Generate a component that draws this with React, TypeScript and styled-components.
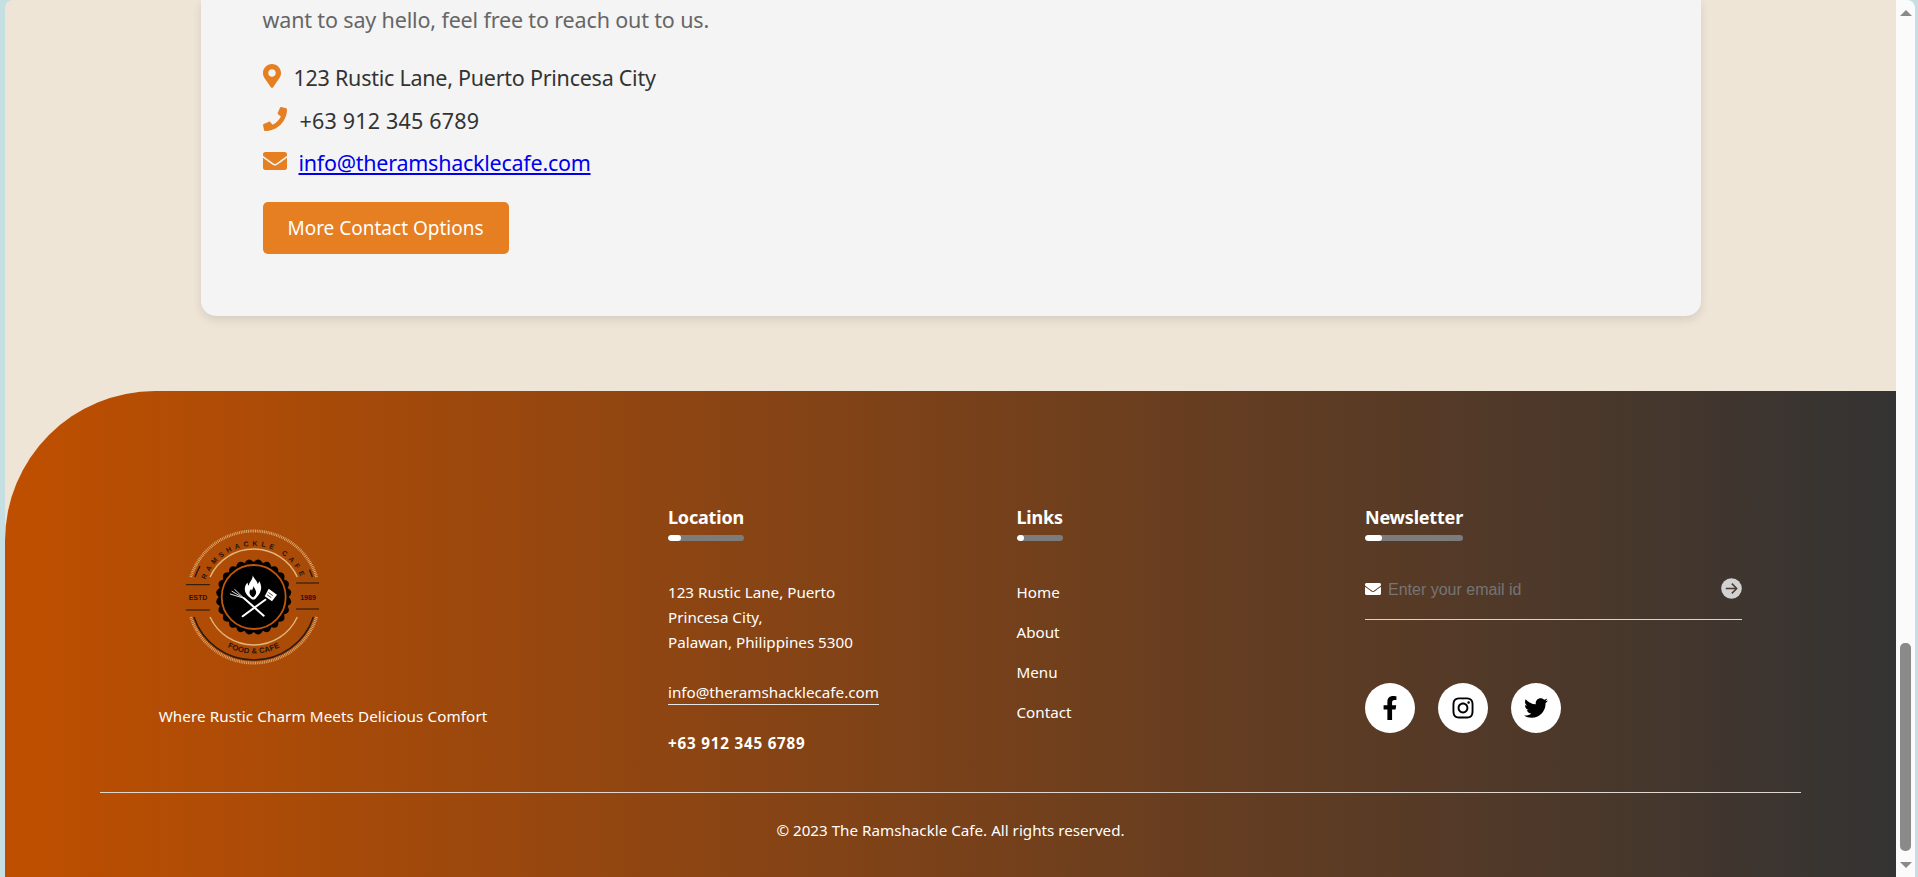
import { FC, ReactNode } from 'react';
import styled, { createGlobalStyle } from 'styled-components';
import { FaEnvelope, FaFacebookF, FaInstagram, FaMapMarkerAlt, FaPhone, FaTwitter } from 'react-icons/fa';

const GlobalStyle = createGlobalStyle`
  html, body {
    margin: 0;
    padding: 0;
    height: 877px;
    overflow: hidden;
  }
  * {
    box-sizing: border-box;
  }
`;

const Window = styled.div`
  display: flex;
  height: 877px;
  padding: 0 3px 0 5px;
  overflow: hidden;
  background: #c5dfe3;
  font-family: "Noto Sans", "Open Sans", sans-serif;
`;

const Page = styled.div`
  flex: 1;
  min-width: 0;
  border-top-left-radius: 8px;
  overflow: hidden;
  background: #eee5d7;
`;

const ScrollBar = styled.div`
  flex: none;
  width: 19px;
  display: flex;
  flex-direction: column;
  align-items: center;
  border-top-right-radius: 8px;
  background: #fbfbfb;
`;

const Arrow = styled.div<{ $down?: boolean }>`
  width: 0;
  height: 0;
  margin-top: ${(p) => (p.$down ? '11px' : '10px')};
  border-left: 6px solid transparent;
  border-right: 6px solid transparent;
  ${(p) => (p.$down ? 'border-top: 6px solid #8a8a8a;' : 'border-bottom: 6px solid #8a8a8a;')}
`;

const Thumb = styled.div`
  width: 11px;
  height: 208px;
  margin-top: 627px;
  border-radius: 5px;
  background: #8a8a8a;
`;

const Card = styled.section`
  width: 1500px;
  margin: 0 auto 75px;
  padding: 4px 62px 62px;
  border-radius: 0 0 15px 15px;
  background: #f4f4f4;
  box-shadow: 0 4px 10px rgba(0, 0, 0, 0.1);
`;

const Intro = styled.p`
  margin: 0 0 27px;
  font-size: 21.5px;
  line-height: 31px;
  letter-spacing: -0.15px;
  color: #666;
`;

const ContactRow = styled.div<{ $gap: number; $spacing: number }>`
  display: flex;
  align-items: flex-start;
  gap: ${(p) => p.$gap}px;
  height: 31px;
  margin-bottom: 11.5px;
  font-size: 21.5px;
  line-height: 31px;
  letter-spacing: ${(p) => p.$spacing}px;
  color: #333;

  svg {
    flex: none;
    margin-top: 2px;
    font-size: 24px;
    color: #e67e22;
  }
  a {
    color: #0000ee;
  }
`;

const PinIcon = styled(FaMapMarkerAlt)`
  width: 18px;
`;

const MoreButton = styled.button`
  display: block;
  width: 246px;
  height: 52px;
  margin-top: 24px;
  padding: 0;
  border: none;
  border-radius: 5px;
  background: #e67e22;
  color: #fff;
  font-family: inherit;
  font-size: 19px;
`;

const Footer = styled.footer`
  height: 486px;
  padding: 114px 95px 0;
  border-top-left-radius: 150px;
  background: linear-gradient(to right, #bf4f00, #333);
  color: #fff;
`;

const Columns = styled.div`
  display: grid;
  grid-template-columns: 568px 348.5px 348.5px 377px;
`;

const Brand = styled.div`
  padding-top: 5px;
`;

const Logo = styled.svg`
  display: block;
  width: 200px;
  height: 170px;
  margin-left: 50px;
`;

const Tagline = styled.p`
  width: 446px;
  margin: 24px 0 0;
  text-align: center;
  font-size: 15.2px;
  line-height: 24px;
  letter-spacing: 0.1px;
`;

const HeadingBox = styled.h3`
  display: inline-block;
  margin: 0;
  font-size: 18px;
  font-weight: 700;
  line-height: 24px;
  letter-spacing: -0.2px;
  vertical-align: top;
`;

const HeadingBar = styled.span`
  display: block;
  height: 6px;
  margin-top: 6px;
  border-radius: 3px;
  overflow: hidden;
  background: #7c7c7c;

  &::before {
    content: '';
    display: block;
    width: 17%;
    height: 100%;
    border-radius: 3px;
    background: #fff;
  }
`;

const Heading: FC<{ children: ReactNode }> = ({ children }) => (
  <HeadingBox>
    {children}
    <HeadingBar />
  </HeadingBox>
);

const Address = styled.address`
  margin-top: 39px;
  font-style: normal;
  font-size: 15.2px;
  line-height: 25px;
`;

const MailLink = styled.a`
  display: inline-block;
  margin-top: 26px;
  border-bottom: 1px solid #e6e6e6;
  font-size: 15.2px;
  line-height: 23px;
`;

const Phone = styled.p`
  margin: 26px 0 0;
  font-size: 15.2px;
  font-weight: 700;
  line-height: 24px;
  letter-spacing: 0.8px;
`;

const LinkList = styled.ul`
  display: flex;
  flex-direction: column;
  gap: 16px;
  margin: 39px 0 0;
  padding: 0;
  list-style: none;
  font-size: 15.2px;
  line-height: 24px;
`;

const Subscribe = styled.form`
  display: flex;
  align-items: center;
  height: 49px;
  margin-top: 30px;
  padding-bottom: 13px;
  border-bottom: 1px solid #d9d4d0;

  > svg:first-child {
    flex: none;
    font-size: 16px;
  }
`;

const EmailInput = styled.input`
  flex: 1;
  min-width: 0;
  height: 22px;
  margin: 2px 0 0 7px;
  padding: 0;
  border: none;
  outline: none;
  background: transparent;
  font-family: "Liberation Sans", Arial, sans-serif;
  font-size: 16px;

  &::placeholder {
    color: #757575;
    opacity: 1;
  }
`;

const GoIcon = styled.svg`
  flex: none;
  width: 21px;
  height: 21px;
`;

const Socials = styled.div`
  display: flex;
  gap: 23px;
  margin-top: 63px;
`;

const SocialLink = styled.a`
  display: flex;
  align-items: center;
  justify-content: center;
  width: 50px;
  height: 50px;
  border-radius: 50%;
  background: #fff;
  color: #000;
  font-size: 24px;
`;

const Rule = styled.hr`
  height: 1px;
  margin: 37px 0 0;
  border: none;
  background: #e0d8d0;
`;

const Copyright = styled.p`
  margin: 25px 0 0;
  text-align: center;
  font-size: 15.2px;
  line-height: 25px;
`;

const CX = 103.7;
const CY = 87;

// arc over the top (up) or under the bottom, ends lifted off the horizontal by `off`
const arc = (r: number, off: number, up: boolean) => {
  const dx = Math.sqrt(r * r - off * off);
  const y = up ? CY - off : CY + off;
  return `M ${CX - dx} ${y} A ${r} ${r} 0 0 ${up ? 1 : 0} ${CX + dx} ${y}`;
};

const scallop = (() => {
  const teeth = 24;
  const parts: string[] = [];
  for (let i = 0; i < teeth; i++) {
    const a = (i / teeth) * Math.PI * 2;
    const b = ((i + 0.5) / teeth) * Math.PI * 2;
    const c = ((i + 1) / teeth) * Math.PI * 2;
    if (i === 0) parts.push(`M ${CX + 35 * Math.cos(a)} ${CY + 35 * Math.sin(a)}`);
    parts.push(`Q ${CX + 41 * Math.cos(b)} ${CY + 41 * Math.sin(b)} ${CX + 35 * Math.cos(c)} ${CY + 35 * Math.sin(c)}`);
  }
  return parts.join(' ') + ' Z';
})();

const CafeLogo: FC = () => (
  <Logo viewBox="0 0 200 170" role="img" aria-label="Ramshackle Cafe logo">
    <defs>
      <path id="logo-top" d={arc(51, 0, true)} />
      <path id="logo-bottom" d={arc(56.5, 0, false)} />
    </defs>
    <g fill="none">
      <path d={arc(66, 20, true)} stroke="#dba468" strokeWidth="3" strokeDasharray="1 0.8" />
      <path d={arc(66, 20, false)} stroke="#dba468" strokeWidth="3" strokeDasharray="1 0.8" />
      <path d={arc(48, 20, true)} stroke="#e2b77d" strokeWidth="1.4" />
      <path d={arc(48, 20, false)} stroke="#e2b77d" strokeWidth="1.4" />
      <path d={arc(63, 20, false)} stroke="#2a1a12" strokeWidth="1.5" />
      <path d={arc(62, 20, true)} stroke="#2a1a12" strokeWidth="1.5" strokeDasharray="12 134 12 200" />
    </g>
    <path d="M36 74.7H60M36 100H60M146 73H169M146 99H169" stroke="#1c1410" strokeWidth="1" />
    <g fontFamily='"Liberation Sans", Arial, sans-serif' fontWeight="700" fill="#1f1410">
      <text x="48" y="89.5" fontSize="7" textAnchor="middle">ESTD</text>
      <text x="158" y="89.5" fontSize="7" textAnchor="middle">1989</text>
      <text fontSize="7" letterSpacing="3.6">
        <textPath href="#logo-top" startOffset="50%" textAnchor="middle">RAMSHACKLE CAFE</textPath>
      </text>
      <text fontSize="7.6" letterSpacing="0.2">
        <textPath href="#logo-bottom" startOffset="50%" textAnchor="middle">FOOD &amp; CAFE</textPath>
      </text>
    </g>
    <path d={scallop} fill="#000" />
    <circle cx={CX} cy={CY} r="32" fill="#000" stroke="#c2570a" strokeWidth="1.8" />
    <path
      fill="#fff"
      d="M102.7 65.3c1.2 3.4 4 5 5 8.6.9-.8 1.3-1.8 1.3-3 2.1 2.8 2.6 6.4 1.8 9.4-.7 2.9-2.6 5.5-5.3 8.4-1.2.8-2.3 1.1-3.3.8-3.4-2.3-6.7-5.2-7.3-9.2-.5-3.1.9-5.8 2.7-7.7 0 1.3.4 2.4 1.2 3.1.5-3.9 4-5.8 3.9-10.4z"
    />
    <path fill="#000" d="M103.5 76c.4 2.2 2.4 3.4 2.6 6 .2 2.3-1.2 4.1-3 5.4-2.2-1-3.8-3-3.6-5.2.1-1.4.8-2.5 1.6-3.3.2.8.5 1.3 1 1.6.3-1.7 1.4-2.8 1.4-4.5z" />
    <path fill="#fff" d="M118.7 78.7l8.3 6-5 6.6-7.3-5z" />
    <path stroke="#000" strokeWidth="0.7" d="M118.5 82.5l4.3 3.1M117 84.7l4.3 3" />
    <g stroke="#fff" fill="none" strokeLinecap="round">
      <path d="M115.3 89.7L92.7 106.3" strokeWidth="2" />
      <path d="M113.7 105.7L94 88.3" strokeWidth="2" />
      <path d="M94 88.3L82 81.3M94 88.3L80.3 84M94 88.3L84.7 79.5" strokeWidth="0.9" />
    </g>
  </Logo>
);

const App: FC = () => (
  <>
    <GlobalStyle />
    <Window>
      <Page>
        <Card>
          <Intro>want to say hello, feel free to reach out to us.</Intro>
          <ContactRow $gap={13} $spacing={-0.25}>
            <PinIcon />
            <span>123 Rustic Lane, Puerto Princesa City</span>
          </ContactRow>
          <ContactRow $gap={13} $spacing={0.2}>
            <FaPhone />
            <span>+63 912 345 6789</span>
          </ContactRow>
          <ContactRow $gap={12} $spacing={-0.25}>
            <FaEnvelope />
            <a href="#mail">info@theramshacklecafe.com</a>
          </ContactRow>
          <MoreButton type="button">More Contact Options</MoreButton>
        </Card>
        <Footer>
          <Columns>
            <Brand>
              <CafeLogo />
              <Tagline>Where Rustic Charm Meets Delicious Comfort</Tagline>
            </Brand>
            <div>
              <Heading>Location</Heading>
              <Address>
                123 Rustic Lane, Puerto
                <br />
                Princesa City,
                <br />
                Palawan, Philippines 5300
              </Address>
              <MailLink>info@theramshacklecafe.com</MailLink>
              <Phone>+63 912 345 6789</Phone>
            </div>
            <div>
              <Heading>Links</Heading>
              <LinkList>
                <li>Home</li>
                <li>About</li>
                <li>Menu</li>
                <li>Contact</li>
              </LinkList>
            </div>
            <div>
              <Heading>Newsletter</Heading>
              <Subscribe>
                <FaEnvelope />
                <EmailInput type="email" placeholder="Enter your email id" />
                <GoIcon viewBox="0 0 21 21">
                  <circle cx="10.5" cy="10.5" r="10.3" fill="#d2d2d2" />
                  <path d="M4.8 10.5h10.8M10.8 5.6l4.9 4.9-4.9 4.9" fill="none" stroke="#4a3a30" strokeWidth="1.5" />
                </GoIcon>
              </Subscribe>
              <Socials>
                <SocialLink><FaFacebookF /></SocialLink>
                <SocialLink><FaInstagram /></SocialLink>
                <SocialLink><FaTwitter /></SocialLink>
              </Socials>
            </div>
          </Columns>
          <Rule />
          <Copyright>© 2023 The Ramshackle Cafe. All rights reserved.</Copyright>
        </Footer>
      </Page>
      <ScrollBar>
        <Arrow />
        <Thumb />
        <Arrow $down />
      </ScrollBar>
    </Window>
  </>
);

export default App;
